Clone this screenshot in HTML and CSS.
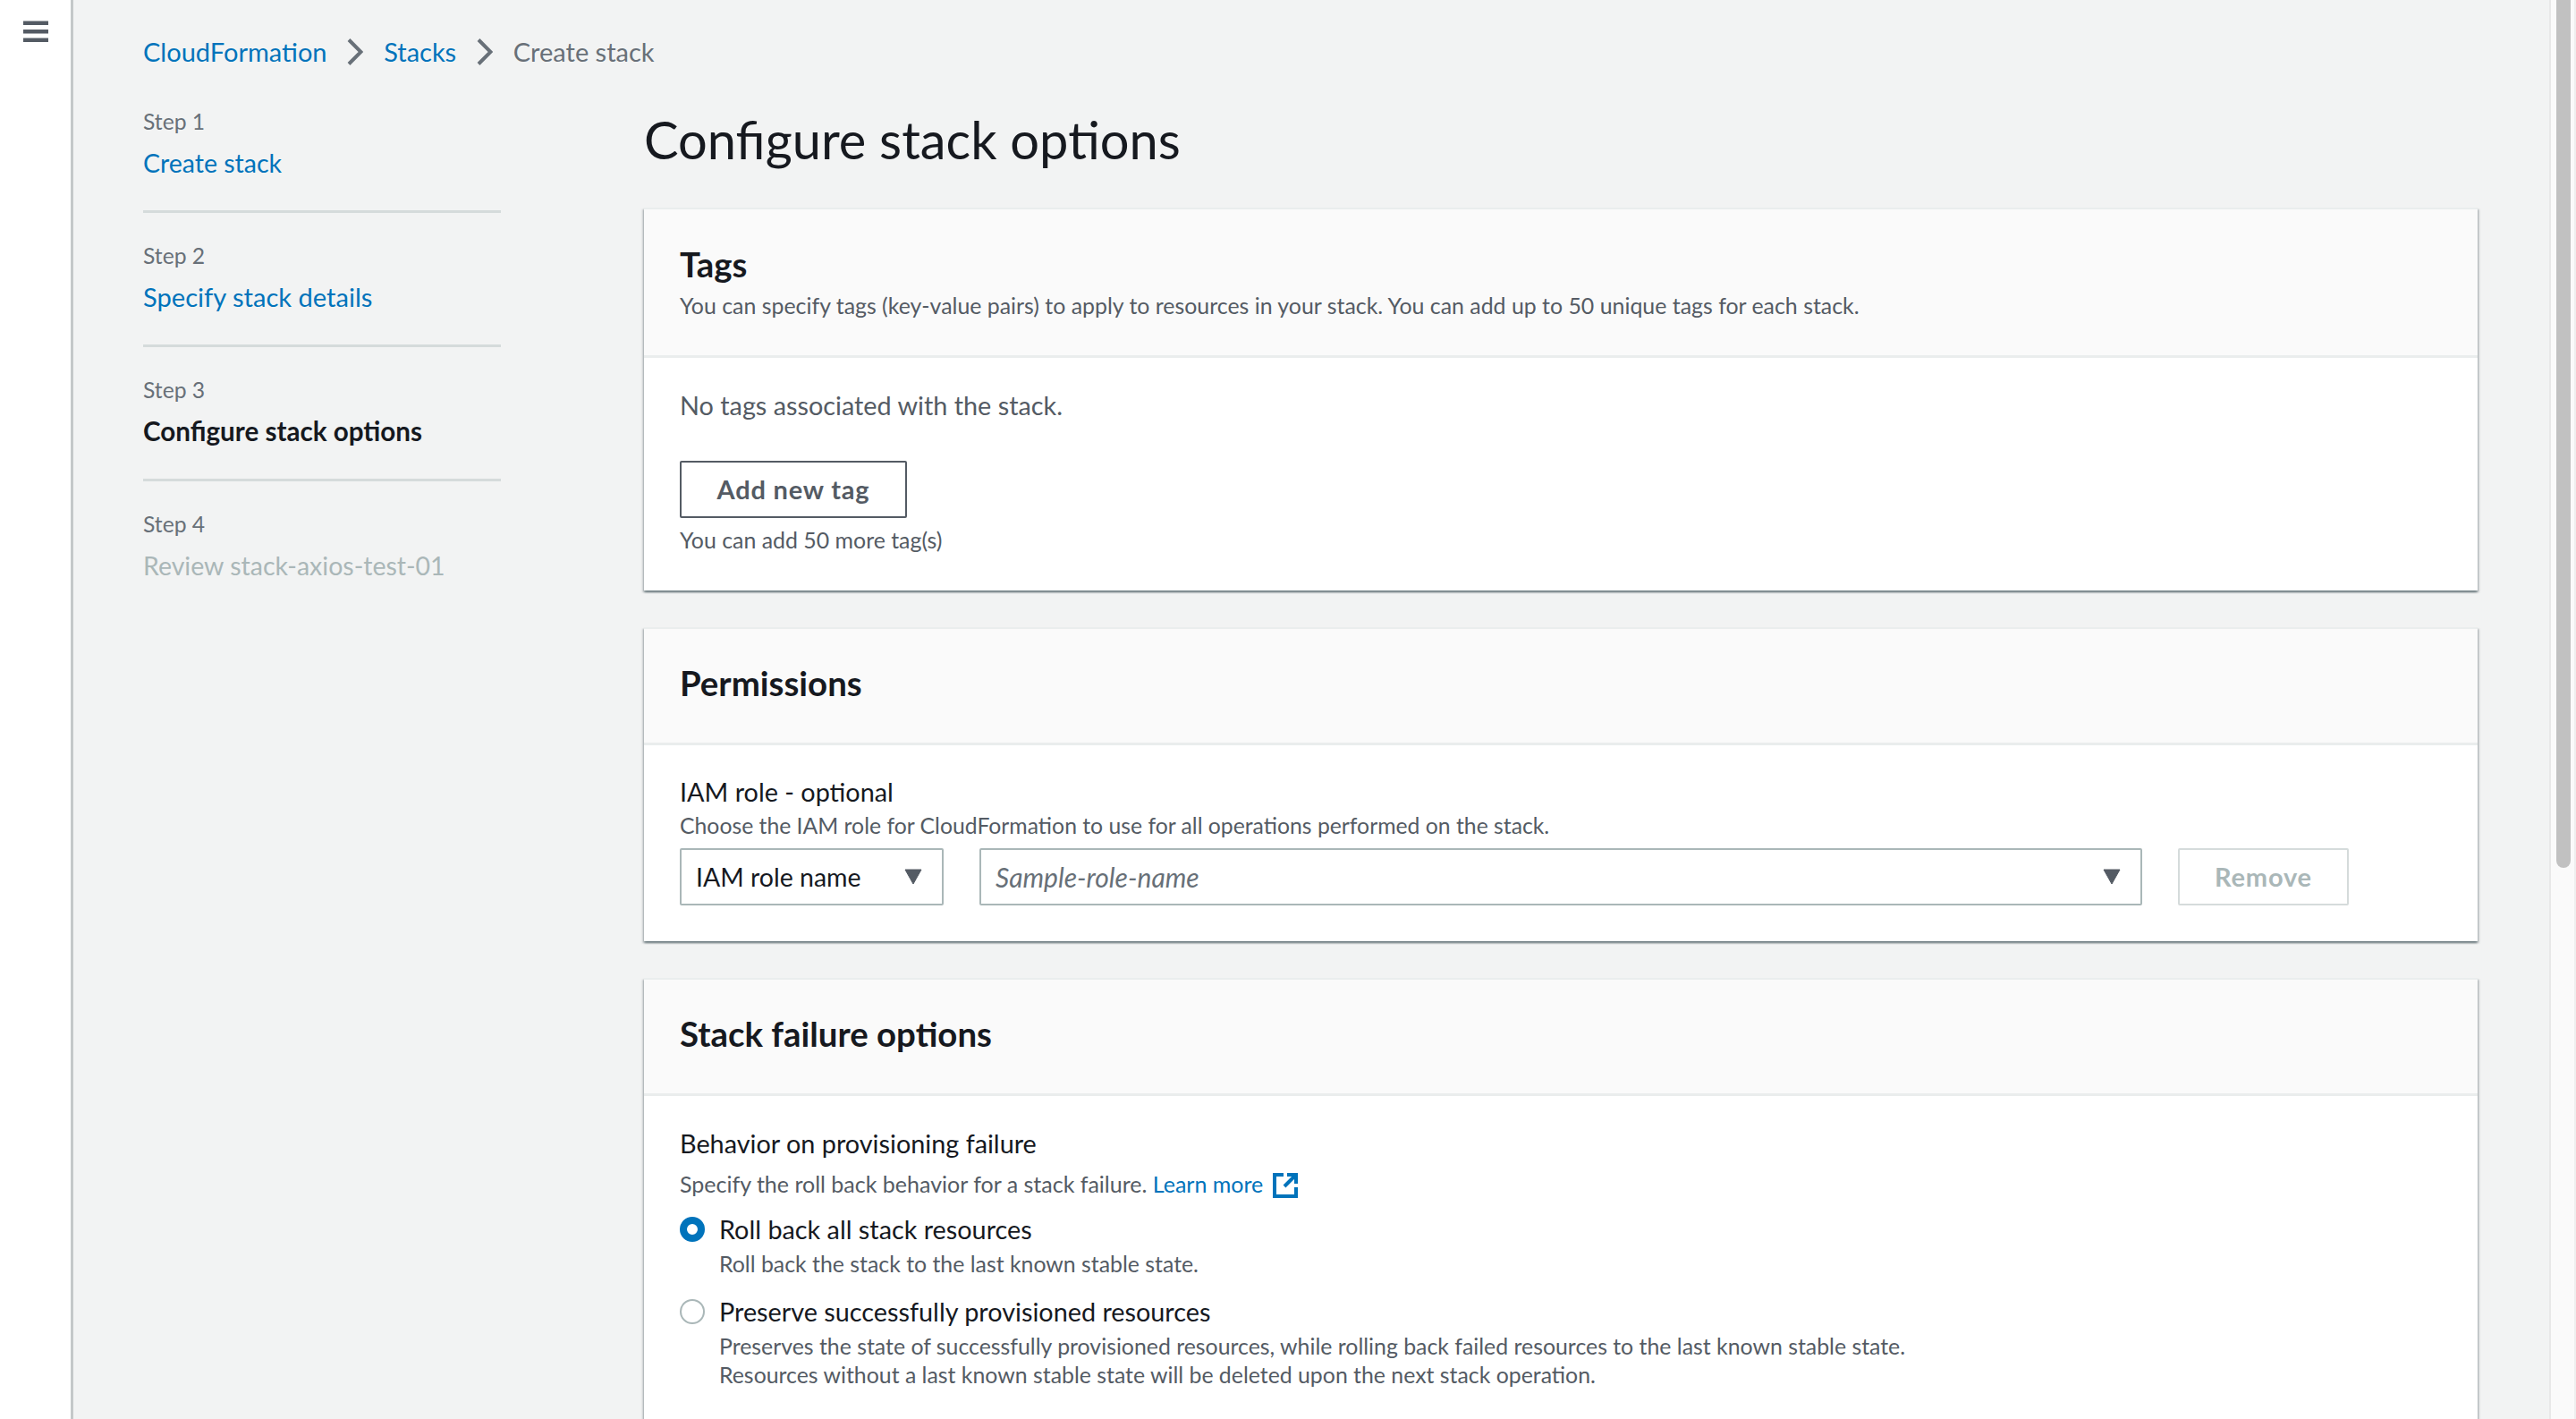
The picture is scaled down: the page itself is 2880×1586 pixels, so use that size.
FILE: index.html
```html
<!DOCTYPE html>
<html lang="en">
<head>
<meta charset="utf-8">
<title>Configure stack options</title>
<link rel="stylesheet" href="styles.css">
</head>
<body>
<div class="app">
  <aside class="rail">
    <svg class="burger" width="28" height="26" viewBox="0 0 28 26"><path d="M0 1.500h28v4.500H0zM0 11h28v4.500H0zM0 20.500h28v4.500H0z" fill="#545b64"/></svg>
  </aside>
  <div class="page">
    <nav class="crumbs">
      <a class="link">CloudFormation</a>
      <svg class="chev" width="18" height="30" viewBox="0 0 18 30"><path d="M2 1.500L15.500 15 2 28.500" fill="none" stroke="#687078" stroke-width="4"/></svg>
      <a class="link">Stacks</a>
      <svg class="chev" width="18" height="30" viewBox="0 0 18 30"><path d="M2 1.500L15.500 15 2 28.500" fill="none" stroke="#687078" stroke-width="4"/></svg>
      <span class="crumb-now">Create stack</span>
    </nav>
    <div class="columns">
      <ol class="steps">
        <li class="step"><div class="step-no">Step 1</div><a class="link step-name step-first">Create stack</a></li>
        <li class="step"><div class="step-no">Step 2</div><a class="link step-name step-second">Specify stack details</a></li>
        <li class="step"><div class="step-no">Step 3</div><b class="step-name step-current">Configure stack options</b></li>
        <li class="step step-last"><div class="step-no">Step 4</div><span class="step-name step-off">Review stack-axios-test-01</span></li>
      </ol>
      <main class="content">
        <h1 class="title">Configure stack options</h1>

        <section class="card">
          <header class="card-head card-head-tags">
            <h2 class="card-title">Tags</h2>
            <p class="muted small tags-desc">You can specify tags (key-value pairs) to apply to resources in your stack. You can add up to 50 unique tags for each stack.</p>
          </header>
          <div class="card-body tags-body">
            <p class="muted body-text">No tags associated with the stack.</p>
            <button class="btn">Add new tag</button>
            <p class="muted small tags-left">You can add 50 more tag(s)</p>
          </div>
        </section>

        <section class="card">
          <header class="card-head"><h2 class="card-title">Permissions</h2></header>
          <div class="card-body perm-body">
            <div class="label">IAM role - optional</div>
            <p class="muted small perm-desc">Choose the IAM role for CloudFormation to use for all operations performed on the stack.</p>
            <div class="perm-row">
              <div class="select select-type"><span>IAM role name</span><svg class="caret" width="20" height="18" viewBox="0 0 20 18"><path d="M1 1h18L10 17z" fill="#545b64" stroke="#545b64" stroke-linejoin="round"/></svg></div>
              <div class="select select-role"><span class="placeholder">Sample-role-name</span><svg class="caret" width="20" height="18" viewBox="0 0 20 18"><path d="M1 1h18L10 17z" fill="#545b64" stroke="#545b64" stroke-linejoin="round"/></svg></div>
              <button class="btn btn-off">Remove</button>
            </div>
          </div>
        </section>

        <section class="card card-open">
          <header class="card-head"><h2 class="card-title">Stack failure options</h2></header>
          <div class="card-body fail-body">
            <div class="label">Behavior on provisioning failure</div>
            <p class="muted small fail-desc">Specify the roll back behavior for a stack failure. <a class="link">Learn more</a>
              <svg class="ext" width="28" height="28" viewBox="0 0 28 28"><path d="M12 2H2v24h24V16M16 2h10v10M26 2L13 15" fill="none" stroke="#0073bb" stroke-width="4"/></svg></p>
            <div class="radio-row">
              <span class="radio radio-on"></span>
              <div><div class="label">Roll back all stack resources</div><p class="muted small radio-desc">Roll back the stack to the last known stable state.</p></div>
            </div>
            <div class="radio-row radio-row-next">
              <span class="radio"></span>
              <div><div class="label">Preserve successfully provisioned resources</div><p class="muted small radio-desc">Preserves the state of successfully provisioned resources, while rolling back failed resources to the last known stable state.<br>Resources without a last known stable state will be deleted upon the next stack operation.</p></div>
            </div>
          </div>
        </section>
      </main>
    </div>
  </div>
  <div class="scrollbar"><div class="thumb"></div></div>
</div>
</body>
</html>
```
FILE: styles.css
```css
* { box-sizing: border-box; }
html, body { margin: 0; height: 100%; overflow: hidden; }
body { font-family: Lato, "Open Sans", sans-serif; font-size: 28.800px; line-height: 40px; color: #16191f; background: #f2f3f3; }
p, h1, h2, ol { margin: 0; padding: 0; }
.app { display: flex; height: 1586px; overflow: hidden; }
.rail { width: 82px; flex: none; background: #fff; border-right: 3px solid #c4c8c9; padding: 22px 0 0 26px; }
.burger { display: block; }
.page { flex: 1; min-width: 0; padding: 38px 0 0 78px; }
.link { color: #0073bb; }
.crumbs { display: flex; align-items: center; gap: 22.800px; height: 40px; font-size: 29px; }
.crumb-now { color: #687078; }
.columns { display: flex; gap: 160px; margin-top: 10px; }
.steps { list-style: none; width: 400px; flex: none; }
.step { height: 150px; padding-top: 30px; border-bottom: 3px solid #d5dbdb; }
.step-last { border-bottom: 0; }
.step-no { font-size: 24.700px; line-height: 36px; color: #687078; }
.step-name { display: block; margin-top: 10px; line-height: 36px; }
.step-first { font-size: 28.500px; }
.step-second { font-size: 29.100px; }
.step-current { font-size: 29.600px; font-weight: 700; }
.step-off { font-size: 28.500px; color: #aab7b8; }
.content { width: 2050px; flex: none; }
.title { font-size: 57.800px; font-weight: 400; line-height: 70px; margin: 33px 0 41px; }
.card { background: #fff; box-shadow: 0 2px 2px rgba(0,28,36,.4), 2px 2px 2px rgba(0,28,36,.15), -2px 2px 2px rgba(0,28,36,.15); margin-bottom: 41px; border-top: 2px solid #eaeded; }
.card-open { margin-bottom: 0; height: 600px; }
.card-head { background: #fafafa; border-bottom: 3px solid #eaeded; padding: 38px 40px 0; height: 130px; }
.card-head-tags { height: 166px; padding-top: 39px; }
.card-title { font-size: 38.400px; line-height: 44px; font-weight: 700; }
.tags-desc { margin-top: 6px; }
.small { font-size: 24.900px; line-height: 36px; }
.muted { color: #545b64; }
.card-body { padding: 0 40px; }
.tags-body { padding-top: 33px; }
.btn { display: block; font: 700 29px/40px Lato, sans-serif; color: #545b64; background: #fff; border: 2px solid #545b64; border-radius: 2px; height: 64px; width: 254px; padding: 0; letter-spacing: 0.800px; }
.tags-body .btn { margin-top: 42px; }
.tags-left { margin-top: 6px; height: 75px; }
.perm-body { padding-top: 32px; height: 219px; }
.perm-desc { margin-top: 0; font-size: 24.750px; }
.perm-row { display: flex; gap: 40px; margin-top: 7px; }
.select { display: flex; align-items: center; justify-content: space-between; height: 64px; background: #fff; border: 2px solid #aab7b8; border-radius: 2px; padding: 0 22px 0 16px; font-size: 28.500px; }
.select-type { width: 295px; }
.select-role { width: 1300px; }
.placeholder { font-size: 30px; font-style: italic; color: #687078; }
.btn-off { width: 191px; color: #aab7b8; border-color: #d5dbdb; }
.fail-body { padding-top: 33px; }
.fail-desc { margin-top: 7px; font-size: 25px; }
.ext { vertical-align: -6px; margin-left: 4px; }
.radio-row { display: flex; gap: 16px; margin-top: 13px; }
.radio-row-next { margin-top: 18px; }
.radio { flex: none; width: 28px; height: 28px; margin-top: 6px; border-radius: 50%; border: 2px solid #aab7b8; background: #fff; }
.radio-on { border: 8px solid #0073bb; }
.radio-desc { font-size: 24.850px; line-height: 32px; margin-top: 2px; }
.scrollbar { width: 30px; flex: none; background: #fafafa; border-left: 2px solid #e8e8e8; border-right: 2px solid #efefef; padding-left: 6px; }
.thumb { width: 16px; height: 970px; background: #c1c1c1; border-radius: 0 0 8px 8px; }
```
